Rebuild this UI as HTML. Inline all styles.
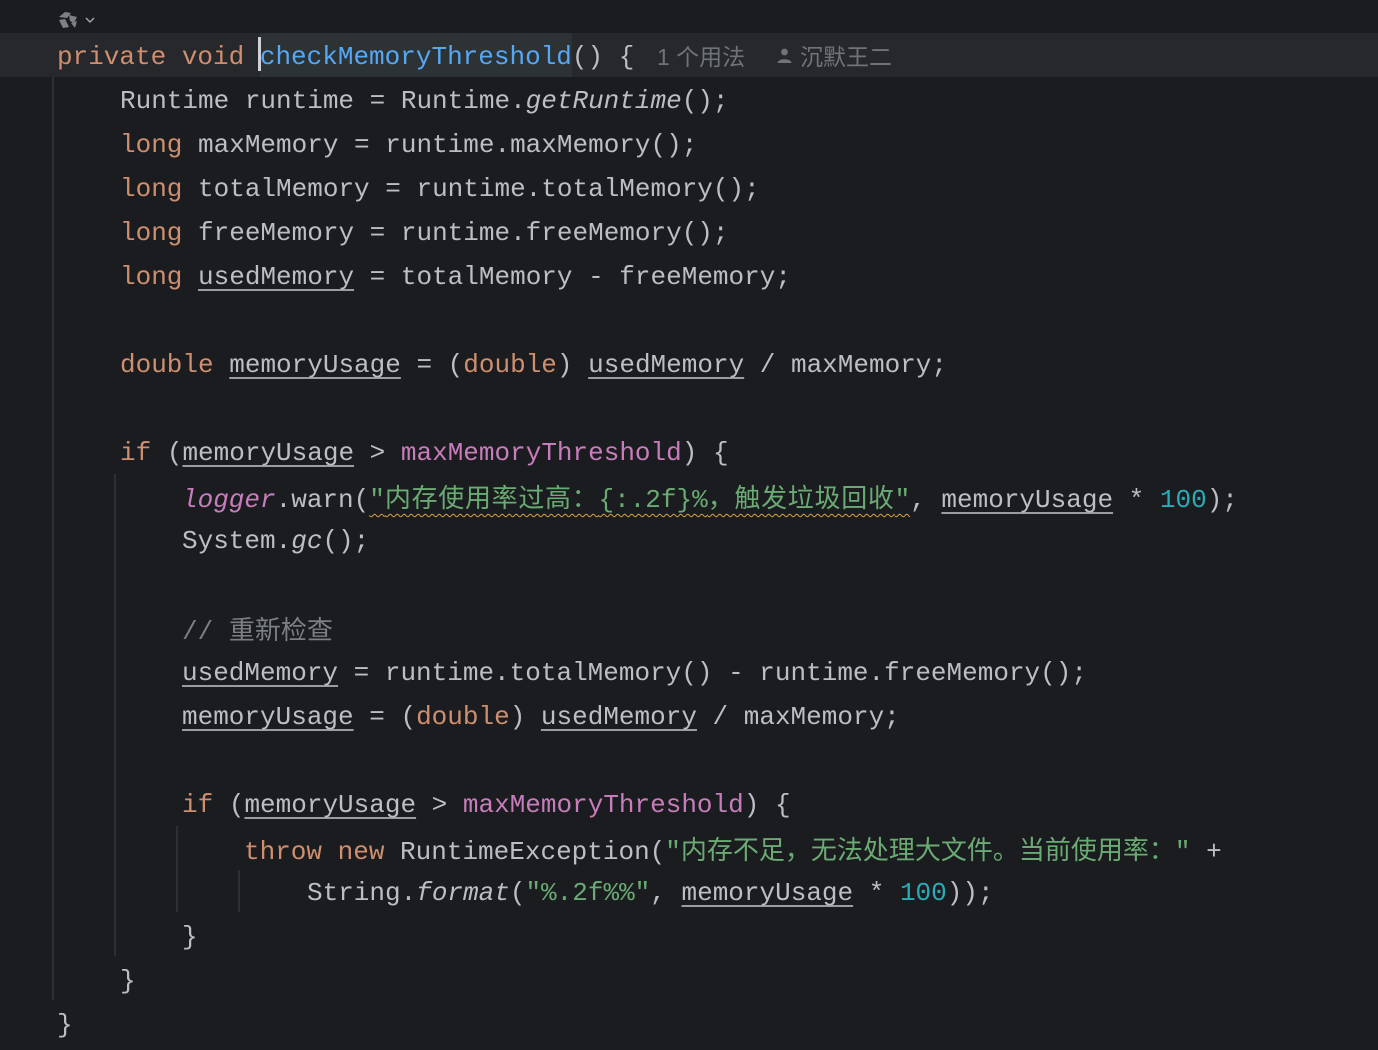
<!DOCTYPE html>
<html><head><meta charset="utf-8"><style>
html,body{margin:0;padding:0;background:#1b1c1f;width:1378px;height:1050px;overflow:hidden}
.l{position:absolute;height:44px;line-height:44px;white-space:pre;font-family:"Liberation Mono","Noto Sans CJK SC",monospace;font-size:26px;color:#bcbec4}
.k{color:#cf8e6d}.f{color:#56a8f5}.p{color:#c77dbb}.s{color:#6aab73}.n{color:#2aacb8}.c{color:#7a7e85}
.i{font-style:italic}
.u{text-decoration:underline;text-underline-offset:5px;text-decoration-thickness:2px;text-decoration-color:#9a9ca2}
.w{text-decoration:underline wavy #d9a343;text-underline-offset:6px;text-decoration-thickness:1px}
.cj{font-family:"Noto Sans CJK SC",sans-serif}
.g{position:absolute;width:2px;background:#2d2f33}
.hint{position:absolute;top:35px;line-height:44px;white-space:pre;font-family:"Liberation Sans","Noto Sans CJK SC",sans-serif;font-size:23px;color:#6f737a}
</style></head><body>
<div style="position:absolute;left:0;top:33px;width:1378px;height:44px;background:#26282b"></div>
<div style="position:absolute;left:260px;top:33px;width:312px;height:44px;background:#2d3234"></div>
<div style="position:absolute;left:258px;top:37px;width:3px;height:34px;background:#cfd1d6"></div>
<svg style="position:absolute;left:57px;top:9px" width="44" height="22" viewBox="0 0 44 22">
<g fill="#7d8087"><polygon points="2,8 8,3 14,4 10,9"/><polygon points="2,11 8,10 12,18 6,19"/><polygon points="12,6 20,8 17,14 13,12"/><polygon points="14,14 20,12 18,19"/></g>
<polyline points="29,9 33,13 37,9" fill="none" stroke="#a0a3a9" stroke-width="1.5"/></svg>
<div class="g" style="left:52px;top:77px;height:923px"></div>
<div class="g" style="left:114px;top:474px;height:482px"></div>
<div class="g" style="left:176px;top:826px;height:86px"></div>
<div class="g" style="left:238px;top:870px;height:42px"></div>

<div class="l" style="left:57px;top:35px"><span class="k">private void </span><span class="f">checkMemoryThreshold</span>() {</div>
<div class="hint" style="left:657px">1 个用法</div>
<svg style="position:absolute;left:776px;top:47px" width="17" height="17" viewBox="0 0 17 17"><circle cx="8.5" cy="5" r="3.4" fill="#6f737a"/><path d="M1.5 16 C1.5 11 15.5 11 15.5 16 Z" fill="#6f737a"/></svg>
<div class="hint" style="left:800px">沉默王二</div>
<div class="l" style="left:120px;top:79px">Runtime runtime = Runtime.<span class="i">getRuntime</span>();</div>
<div class="l" style="left:120px;top:123px"><span class="k">long</span> maxMemory = runtime.maxMemory();</div>
<div class="l" style="left:120px;top:167px"><span class="k">long</span> totalMemory = runtime.totalMemory();</div>
<div class="l" style="left:120px;top:211px"><span class="k">long</span> freeMemory = runtime.freeMemory();</div>
<div class="l" style="left:120px;top:255px"><span class="k">long</span> <span class="u">usedMemory</span> = totalMemory - freeMemory;</div>
<div class="l" style="left:120px;top:343px"><span class="k">double</span> <span class="u">memoryUsage</span> = (<span class="k">double</span>) <span class="u">usedMemory</span> / maxMemory;</div>
<div class="l" style="left:120px;top:431px"><span class="k">if</span> (<span class="u">memoryUsage</span> &gt; <span class="p">maxMemoryThreshold</span>) {</div>
<div class="l" style="left:182px;top:475px"><span class="p i">logger</span>.warn(<span class="s w">"<span class="cj" style="letter-spacing:0.7px">内存使用率过高：</span>{:.2f}%<span class="cj" style="letter-spacing:0.7px">，触发垃圾回收</span>"</span>, <span class="u">memoryUsage</span> * <span class="n">100</span>);</div>
<div class="l" style="left:182px;top:519px">System.<span class="i">gc</span>();</div>
<div class="l" style="left:182px;top:607px"><span class="c">// <span class="cj">重新检查</span></span></div>
<div class="l" style="left:182px;top:651px"><span class="u">usedMemory</span> = runtime.totalMemory() - runtime.freeMemory();</div>
<div class="l" style="left:182px;top:695px"><span class="u">memoryUsage</span> = (<span class="k">double</span>) <span class="u">usedMemory</span> / maxMemory;</div>
<div class="l" style="left:182px;top:783px"><span class="k">if</span> (<span class="u">memoryUsage</span> &gt; <span class="p">maxMemoryThreshold</span>) {</div>
<div class="l" style="left:244px;top:827px"><span class="k">throw new</span> RuntimeException(<span class="s">"<span class="cj">内存不足，无法处理大文件。当前使用率：</span>"</span> +</div>
<div class="l" style="left:307px;top:871px">String.<span class="i">format</span>(<span class="s">"%.2f%%"</span>, <span class="u">memoryUsage</span> * <span class="n">100</span>));</div>
<div class="l" style="left:182px;top:915px">}</div>
<div class="l" style="left:120px;top:959px">}</div>
<div class="l" style="left:57px;top:1003px">}</div>
</body></html>
